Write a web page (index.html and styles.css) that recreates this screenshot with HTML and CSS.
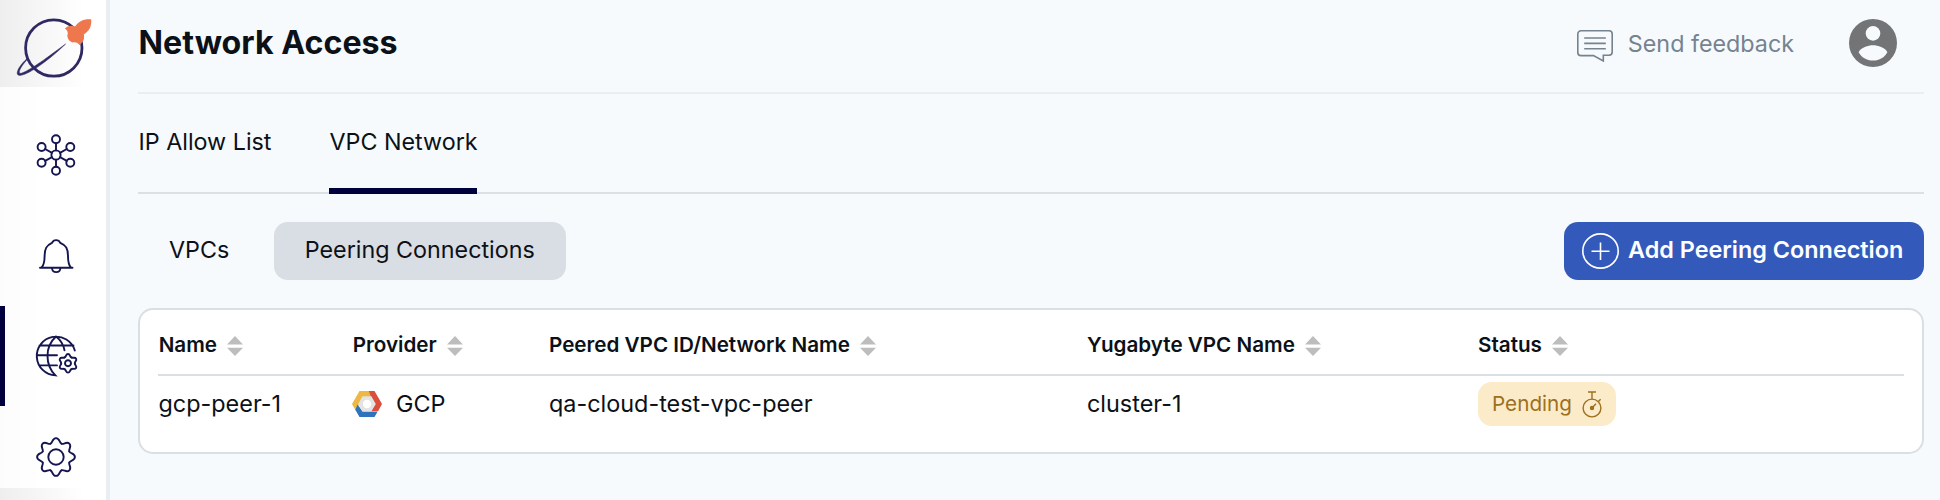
FILE: index.html
```html
<!DOCTYPE html>
<html lang="en">
<head>
<meta charset="utf-8">
<title>Network Access</title>
<link rel="stylesheet" href="styles.css">
</head>
<body>
<svg class="defs" aria-hidden="true">
  <symbol id="sort" viewBox="0 0 16 20"><path d="M8 0L16 8.400H0zM0 11.800H16L8 20z"/></symbol>
  <path id="tooth8" d="M-5.500-13.300C-3.100-14.300-3.900-18.900 0-18.900S3.100-14.300 5.500-13.300"/>
  <path id="tooth6" d="M-3.400-5.900C-1.400-7-2.400-9.300 0-9.300S1.400-7 3.400-5.900"/>
</svg>
<div class="app">
  <nav class="sidebar">
    <a class="logo">
      <svg width="106" height="87" viewBox="0 0 106 87">
        <circle cx="53.800" cy="48" r="28.200" class="planet"/>
        <path class="orbit" d="M65.600 44C55 51.500 45 59.500 35.500 65.500C27 71 20.500 74.500 19.400 73C18.600 70.500 22.500 64.500 27.600 59.200L26.800 58.800C20.500 64.500 16.700 70.500 17.300 74C18.500 77.500 27 74 36.500 67.800C46.500 61 56.500 53 65.600 44Z"/>
        <path class="rocket" d="M64.800 28.500C67 26.200 70.500 24.800 75 26.500C78.500 21.500 83 18.800 91.200 19.300C91.700 26.500 89.500 31 83.800 34.500C84.800 38.500 83.300 42.500 79.500 45C77.500 42.500 75.500 42 72.500 42.500C68.500 41 66.500 37 67.800 33.500C67.800 31 66.500 29.500 64.800 28.500Z"/>
      </svg>
    </a>
    <a class="item clusters">
      <svg width="40" height="42" viewBox="36 134 40 42">
        <circle cx="56" cy="155" r="4.600"/><circle cx="56" cy="139.300" r="4"/><circle cx="56" cy="170.800" r="4"/>
        <circle cx="41.600" cy="147" r="4"/><circle cx="70.300" cy="147" r="4"/><circle cx="41.600" cy="162.800" r="4"/><circle cx="70.300" cy="162.800" r="4"/>
        <path d="M56 143.300V150.400M56 159.600V166.800M45.100 149L52 152.800M66.800 149L60 152.800M45.100 160.800L52 157.200M66.800 160.800L60 157.200"/>
      </svg>
    </a>
    <a class="item alerts">
      <svg width="40" height="40" viewBox="36 236 40 40">
        <path d="M41.500 267.700C44 265 44.600 262 44.600 256C44.600 248.500 46.500 245.500 52 242.900C53.500 239.200 58.700 239.200 60.300 242.900C66 245.500 68 248.500 68 256C68 262 68.500 265 71 267.700M40 267.700H72.500M52 268C52.200 273.500 60.200 273.500 60.400 268"/>
      </svg>
    </a>
    <a class="item network active">
      <svg width="44" height="44" viewBox="34 334 44 44">
        <path d="M74.800 350.500A19.400 19.400 0 1 0 55.400 375.400C50 370 47.500 363 47.500 356C47.500 348.500 51 341 56 336.500C60 339.500 63.500 345 64.500 350.300M39.500 345.500H73.500M36.800 355.300H57M39.500 365.400H57"/>
        <g transform="translate(68 363.300)">
          <circle r="3"/>
          <use href="#tooth6"/><use href="#tooth6" transform="rotate(60)"/><use href="#tooth6" transform="rotate(120)"/><use href="#tooth6" transform="rotate(180)"/><use href="#tooth6" transform="rotate(240)"/><use href="#tooth6" transform="rotate(300)"/>
        </g>
      </svg>
    </a>
    <a class="item settings">
      <svg width="44" height="44" viewBox="-22 -22 44 44">
        <circle r="7.700"/>
        <use href="#tooth8"/><use href="#tooth8" transform="rotate(45)"/><use href="#tooth8" transform="rotate(90)"/><use href="#tooth8" transform="rotate(135)"/><use href="#tooth8" transform="rotate(180)"/><use href="#tooth8" transform="rotate(225)"/><use href="#tooth8" transform="rotate(270)"/><use href="#tooth8" transform="rotate(315)"/>
      </svg>
    </a>
    <div class="foot"></div>
  </nav>
  <main class="main">
    <header class="header">
      <h1 class="title">Network Access</h1>
      <a class="feedback">
        <svg width="36" height="32" viewBox="0 0 36 32">
          <path d="M4 .8H32A3.200 3.200 0 0 1 35.200 4V22A3.200 3.200 0 0 1 32 25.200H26.300V31L16.500 25.600H4A3.200 3.200 0 0 1 .8 22.400V4A3.200 3.200 0 0 1 4 .8ZM7.200 8H28.800M7.200 13.400H28.800M7.200 18.700H28.800"/>
        </svg>
        <span>Send feedback</span>
      </a>
      <svg class="avatar" width="48" height="48" viewBox="0 0 48 48">
        <circle cx="24" cy="24" r="24"/>
        <circle class="hole" cx="24" cy="14.400" r="7.300"/>
        <path class="hole" d="M9.600 33.200C12 28.500 19 26.300 24 26.300S36 28.500 38.400 33.200C35.500 38.300 30.500 41.600 24 41.600S12.500 38.300 9.600 33.200Z"/>
      </svg>
    </header>
    <div class="tabs">
      <a class="tab">IP Allow List</a>
      <a class="tab selected">VPC Network</a>
    </div>
    <div class="toolbar">
      <a class="pill">VPCs</a>
      <a class="pill on">Peering Connections</a>
      <button class="add">
        <svg width="37" height="36" viewBox="0 0 37 36"><ellipse cx="18.500" cy="18" rx="17.700" ry="17.100"/><path d="M9.500 18.200H27.500M18.500 9.400V27"/></svg>
        <span>Add Peering Connection</span>
      </button>
    </div>
    <section class="card">
      <div class="row head">
        <div>Name<svg class="sort"><use href="#sort"/></svg></div>
        <div>Provider<svg class="sort"><use href="#sort"/></svg></div>
        <div>Peered VPC ID/Network Name<svg class="sort"><use href="#sort"/></svg></div>
        <div>Yugabyte VPC Name<svg class="sort"><use href="#sort"/></svg></div>
        <div>Status<svg class="sort"><use href="#sort"/></svg></div>
      </div>
      <div class="row body">
        <div>gcp-peer-1</div>
        <div>
          <svg class="gcp" width="30" height="26" viewBox="0 0 30 26">
            <path fill="#edb844" d="M0 13L7.500 0H16.800L20.500 6.500H11.200L5.500 16L3.700 19.500Z"/>
            <path fill="#da4e3c" d="M16.800 0H22.500L30 13L26.200 20H18.800L22.800 13L19.200 6.500Z"/>
            <path fill="#2f74bb" d="M5.600 13.500L10.500 20.600H25.700L22.500 26H7.500L3.300 18.700Z"/>
            <path fill="#e3e3e4" d="M6.200 13L10.500 5.200H19.300L23.800 13L19.300 20.600H10.500Z"/>
            <circle cx="15" cy="13" r="4.200" fill="#fff"/>
          </svg>
          GCP
        </div>
        <div>qa-cloud-test-vpc-peer</div>
        <div>cluster-1</div>
        <div>
          <span class="badge">Pending
            <svg width="20" height="27" viewBox="0 0 20 27"><circle cx="10" cy="17" r="8.900"/><path d="M6 1H14M10 1V8M10 17L14 12.800M16.500 10.500L18.600 8.200"/><circle class="dot" cx="10" cy="17" r="1.500"/></svg>
          </span>
        </div>
      </div>
    </section>
  </main>
</div>
</body>
</html>
```

FILE: styles.css
```css
* { box-sizing: border-box; }
body { margin: 0; font: 23.4px/30px "Inter", sans-serif; color: #0b1117; background: #f6fafd; overflow: hidden; }
svg { display: block; flex: none; }
.defs { position: absolute; width: 0; height: 0; }
.app { display: flex; height: 500px; }

.sidebar { width: 110px; flex: none; display: flex; flex-direction: column; background: linear-gradient(90deg, #fcfcfc, #fff 40px); border-right: 4px solid #e9eef2; }
.logo { height: 87px; background: linear-gradient(90deg, #eeeeee, #fff 84px); }
.planet { fill: none; stroke: #2f2963; stroke-width: 2.8; }
.orbit { fill: #2f2963; stroke: #2f2963; stroke-width: .5; }
.rocket { fill: #ee774e; }
.item { display: flex; align-items: center; justify-content: center; padding-left: 6px; height: 100px; fill: none; stroke: #151650; stroke-width: 1.9; stroke-linecap: round; }
.clusters { margin-top: 18px; }
.alerts { height: 101px; }
.active { border-left: 5px solid #00003c; padding-left: 1px; }
.settings { height: 82px; padding-top: 20px; }
.foot { height: 12px; background: linear-gradient(90deg, #eeeeee, #fff 84px); }

.main { flex: 1; padding: 0 16px 0 28px; }
.header { display: flex; align-items: center; height: 94px; padding: 0 27px 6px 0; border-bottom: 2px solid #e9eef2; }
.title { margin: 0 auto 0 .5px; font-size: 32.2px; line-height: 40px; font-weight: 700; }
.feedback { display: flex; align-items: center; gap: 15px; margin-right: 55px; color: #758390; font-size: 23.3px; }
.feedback svg { margin-top: 5px; fill: none; stroke: #758390; stroke-width: 1.6; }
.feedback span { padding-top: 1px; }
.avatar { fill: #737476; }
.hole { fill: #f6fafd; }

.tabs { display: flex; gap: 58px; height: 100px; padding-left: .5px; border-bottom: 2px solid #dbe0e5; font-size: 23.3px; }
.tab { height: 100px; padding-top: 33px; }
.selected { width: 148px; white-space: nowrap; border-bottom: 6px solid #00003c; }

.toolbar { display: flex; margin-top: 28px; height: 58px; }
.pill { height: 58px; padding: 13px 31px 0; border-radius: 14px; font-size: 23.3px; }
.pill + .pill { margin-left: 13.500px; }
.on { background: #d9dde4; }
.add { display: flex; align-items: center; gap: 9px; margin-left: auto; width: 360px; padding: 0 0 0 18px; border: 0; border-radius: 14px; background: #335aba; color: #fff; font: inherit; font-weight: 600; }
.add svg { fill: none; stroke: #fff; stroke-width: 1.6; }
.add span { padding-bottom: 3px; white-space: nowrap; }

.card { margin-top: 28px; height: 146px; padding: 0 18px; background: #fff; border: 2px solid #d8dfe5; border-radius: 15px; }
.row { display: grid; grid-template-columns: 194px 197px 538px 391px 1fr; }
.row > div { display: flex; align-items: center; white-space: nowrap; }
.head { height: 66px; padding-top: 5px; border-bottom: 2px solid #d8dfe5; font-size: 20.65px; font-weight: 600; }
.head > div:nth-child(-n+2) { padding-left: .7px; }
.sort { width: 16px; height: 20px; margin: 3px 0 0 10px; fill: #bdbdbd; }
.body { height: 56px; }
.body > div:first-child { padding-left: .5px; }
.gcp { margin-right: 14px; }
.badge { display: flex; align-items: center; gap: 10px; height: 44px; padding: 0 14px; border-radius: 14px; background: #fcebc9; color: #9d7020; font-size: 20.7px; }
.badge svg { fill: none; stroke: #9d7020; stroke-width: 1.4; }
.badge .dot { fill: #9d7020; }
```
